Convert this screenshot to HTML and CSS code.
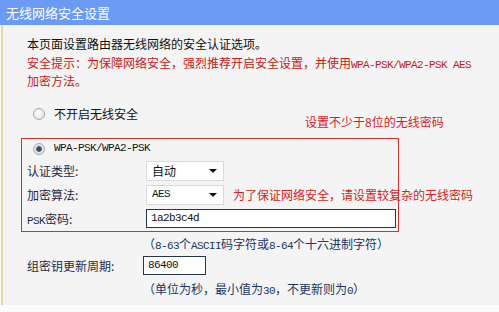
FILE: index.html
```html
<!DOCTYPE html>
<html lang="zh-CN">
<head>
  <meta charset="UTF-8">
  <title>无线网络安全设置</title>
  <link rel="stylesheet" href="styles.css">
</head>
<body>
  <div class="title_bar">无线网络安全设置</div>
  <div class="panel">
    <div class="intro">
      <p>本页面设置路由器无线网络的安全认证选项。</p>
      <p class="warn">安全提示：为保障网络安全，强烈推荐开启安全设置，并使用<span class="latin">WPA-PSK/WPA2-PSK AES</span></p>
      <p class="warn">加密方法。</p>
    </div>

    <div class="radio_row">
      <span class="radio"></span>
      <span>不开启无线安全</span>
    </div>

    <div class="wpa_box">
      <div class="radio_row inner">
        <span class="radio checked"></span>
        <span class="latin">WPA-PSK/WPA2-PSK</span>
      </div>
      <div class="row">
        <span class="label">认证类型:</span>
        <div class="select"><span>自动</span><i class="arrow"></i></div>
      </div>
      <div class="row">
        <span class="label">加密算法:</span>
        <div class="select"><span class="latin">AES</span><i class="arrow"></i></div>
      </div>
      <div class="row">
        <span class="label"><span class="latin">PSK</span>密码:</span>
        <div class="text_input wide"><span class="latin">1a2b3c4d</span></div>
      </div>
    </div>

    <div class="hint">（<span class="latin">8-63</span>个<span class="latin">ASCII</span>码字符或<span class="latin">8-64</span>个十六进制字符）</div>
    <div class="row outer">
      <span class="label">组密钥更新周期:</span>
      <div class="text_input short"><span class="latin">86400</span></div>
    </div>
    <div class="hint">（单位为秒，最小值为<span class="latin">30</span>，不更新则为<span class="latin">0</span>）</div>

    <!-- 标注 -->
    <span class="note note_top">设置不少于8位的无线密码</span>
    <span class="note note_mid">为了保证网络安全，请设置较复杂的无线密码</span>
  </div>
</body>
</html>
```

FILE: styles.css
```css
body {
  margin: 0;
  background-color: #fbfbfb;
  font-family: "Noto Sans CJK SC", sans-serif;
  font-size: 12px;
  color: #111;
}
p {
  margin: 0;
  height: 18.5px;
}
.latin {
  font-family: "Liberation Mono", monospace;
  font-size: 11px;
  letter-spacing: -0.6px;
  line-height: 1;
}
.title_bar {
  height: 25px;
  line-height: 25px;
  padding-left: 6px;
  background-color: #6a9af4;
  color: #fff;
  font-size: 13px;
}
.panel {
  position: relative;
  height: 280px;
  margin-left: 1px;
  border-left: 2px solid #e9d7a2;
  background-color: #f4f4f4;
}
.intro {
  padding: 10px 0 0 24px;
  line-height: 18.5px;
}
.warn {
  color: #c41a1a;
}
.radio_row {
  display: flex;
  align-items: center;
  gap: 9px;
  height: 20px;
  margin-top: 13px;
  padding-left: 30px;
}
.radio_row.inner {
  margin-top: 0;
  padding-left: 11px;
}
.radio {
  width: 10px;
  height: 10px;
  border: 1px solid #a8a8a8;
  border-radius: 50%;
  background: radial-gradient(circle at 40% 40%, #fff 0%, #e6e6e6 70%, #cfcfcf 100%);
}
.radio.checked {
  background: radial-gradient(circle, #2e3e55 0%, #4a5a70 35%, #dcdcdc 45%, #f4f4f4 100%);
}
.wpa_box {
  width: 376px;
  margin: 14px 0 0 18px;
  border: 1px solid #c8343a;
}
.row {
  display: flex;
  align-items: center;
  height: 24px;
}
.label {
  width: 119px;
  padding-left: 5px;
  color: #1e2a44;
}
.select {
  display: flex;
  align-items: center;
  justify-content: space-between;
  box-sizing: border-box;
  width: 78px;
  height: 20px;
  padding: 0 5px;
  border: 1px solid #dadada;
  background-color: #fff;
}
.arrow {
  border-top: 4px solid #111;
  border-left: 4px solid transparent;
  border-right: 4px solid transparent;
  margin-right: 1px;
}
.text_input {
  display: flex;
  align-items: center;
  box-sizing: border-box;
  height: 19px;
  padding-left: 4px;
  border: 1px solid #24354e;
  background-color: #fff;
}
.wide {
  width: 250px;
}
.short {
  width: 63px;
}
.hint {
  height: 23px;
  line-height: 23px;
  padding-left: 140px;
  color: #213463;
}
.row.outer {
  height: 21px;
}
.row.outer .label {
  padding-left: 24px;
  width: 116px;
}
.row.outer + .hint {
  height: 26px;
  line-height: 26px;
}
.note {
  position: absolute;
  color: #d22424;
  font-size: 12px;
  background-color: #f4f4f4;
}
.note_top {
  left: 302px;
  top: 88px;
}
.note_mid {
  left: 230px;
  top: 161px;
  background-color: transparent;
}
```
